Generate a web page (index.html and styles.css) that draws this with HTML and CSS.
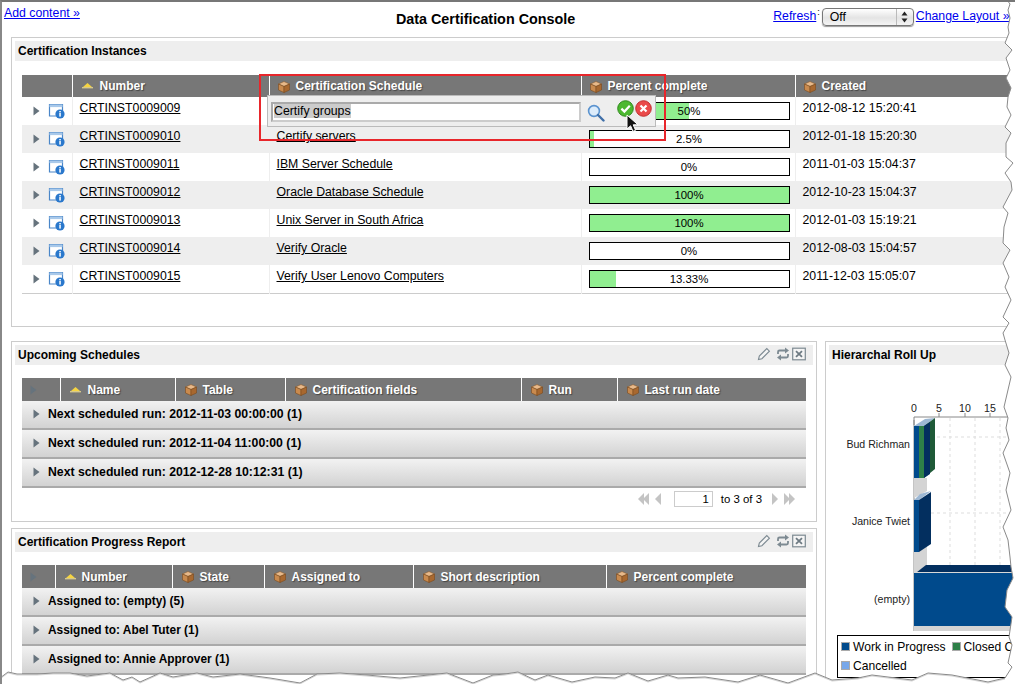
FILE: index.html
```html
<!DOCTYPE html>
<html lang="en">
<head>
  <meta charset="UTF-8">
  <title>Data Certification Console</title>
  <link rel="stylesheet" href="styles.css">
</head>
<body>
<svg class="defs" width="0" height="0">
  <symbol id="cube" viewBox="0 0 12 12">
    <polygon points="6,0.5 11.5,3 6,5.5 0.5,3" fill="#e8b98a" stroke="#8a5a2c" stroke-width=".6"/>
    <polygon points="0.5,3 6,5.5 6,11.5 0.5,9" fill="#c98a4e" stroke="#7a4a20" stroke-width=".6"/>
    <polygon points="11.5,3 6,5.5 6,11.5 11.5,9" fill="#a8682f" stroke="#7a4a20" stroke-width=".6"/>
  </symbol>
  <symbol id="sort" viewBox="0 0 11 8">
    <polygon points="5.5,1 10,5 1,5" fill="#f5d442"/>
    <rect x="0" y="5" width="11" height="1.4" fill="#d8c98a"/>
  </symbol>
  <symbol id="arrow" viewBox="0 0 7 10">
    <polygon points="0.5,0.5 6.5,5 0.5,9.5" fill="#66737d"/>
  </symbol>
  <symbol id="info" viewBox="0 0 17 16">
    <path d="M11 13H1.5V1.5h13V8" fill="#fff" stroke="#4a86c8" stroke-width="1.2"/>
    <rect x="1.5" y="1.5" width="13" height="2.6" fill="#a9c9ea"/>
    <circle cx="12" cy="11" r="4.6" fill="#2a78cc"/>
    <rect x="11.3" y="10" width="1.5" height="3.6" fill="#fff"/>
    <rect x="11.3" y="8" width="1.5" height="1.4" fill="#fff"/>
  </symbol>
  <symbol id="dbl" viewBox="0 0 12 14">
    <polygon points="0,7 6,1 6,13" fill="#c4c4c4"/>
    <polygon points="5,7 11,1 11,13" fill="#c4c4c4"/>
  </symbol>
  <symbol id="single" viewBox="0 0 8 14">
    <polygon points="1,7 7,1 7,13" fill="#c4c4c4"/>
  </symbol>
  <symbol id="pencil" viewBox="0 0 14 14">
    <path d="M1.5 12.5l.8-3.4L9.8 1.6l2.6 2.6-7.5 7.5z" fill="#f4f4f4" stroke="#7d8a92" stroke-width="1.1"/>
  </symbol>
  <symbol id="refresh" viewBox="0 0 14 14">
    <path d="M2 7V5a1.5 1.5 0 0 1 1.5-1.5H9" fill="none" stroke="#7d8a92" stroke-width="1.8"/>
    <polygon points="9,0.5 13,3.5 9,6.5" fill="#7d8a92"/>
    <path d="M12 7v2a1.5 1.5 0 0 1-1.5 1.5H5" fill="none" stroke="#7d8a92" stroke-width="1.8"/>
    <polygon points="5,7.5 1,10.5 5,13.5" fill="#7d8a92"/>
  </symbol>
  <symbol id="closebox" viewBox="0 0 14 14">
    <rect x=".7" y="1.2" width="12.6" height="11.6" fill="#f4f4f4" stroke="#7d8a92" stroke-width="1.2"/>
    <path d="M4 4.2l6 5.6M10 4.2l-6 5.6" stroke="#6d7a82" stroke-width="1.8"/>
  </symbol>
</svg>

<div class="page">
  <div class="topbar">
    <a class="link" href="#">Add content »</a>
    <h1 class="title">Data Certification Console</h1>
    <div class="top-right">
      <a class="link" href="#">Refresh</a><span class="colon">:</span>
      <div class="select">
        <span class="select-value">Off</span>
        <span class="select-arrows">
          <svg width="7" height="12" viewBox="0 0 7 12"><polygon points="3.5,0.5 6.5,4.5 0.5,4.5" fill="#222"/><polygon points="3.5,11.5 6.5,7.5 0.5,7.5" fill="#222"/></svg>
        </span>
      </div>
      <a class="link" href="#">Change Layout »</a>
    </div>
  </div>

  <div class="layout">
    <section class="panel panel-wide">
      <div class="panel-head"><h2>Certification Instances</h2></div>
      <table class="grid grid-instances">
        <colgroup><col class="c50"><col class="c197"><col class="c312"><col class="c214"><col class="c230"></colgroup>
        <thead>
          <tr>
            <th></th>
            <th><span class="th-in sorted"><svg class="sort-ic"><use href="#sort"/></svg>Number</span></th>
            <th><span class="th-in"><svg class="cube-ic"><use href="#cube"/></svg>Certification Schedule</span></th>
            <th><span class="th-in"><svg class="cube-ic"><use href="#cube"/></svg>Percent complete</span></th>
            <th><span class="th-in"><svg class="cube-ic"><use href="#cube"/></svg>Created</span></th>
          </tr>
        </thead>
        <tbody>
          <tr>
            <td><span class="row-tools"><svg class="arrow-ic"><use href="#arrow"/></svg><svg class="info-ic"><use href="#info"/></svg></span></td>
            <td><a href="#">CRTINST0009009</a></td>
            <td></td>
            <td class="pct"><div class="bar"><div class="fill" style="width:50%"></div><span>50%</span></div></td>
            <td>2012-08-12 15:20:41</td>
          </tr>
          <tr>
            <td><span class="row-tools"><svg class="arrow-ic"><use href="#arrow"/></svg><svg class="info-ic"><use href="#info"/></svg></span></td>
            <td><a href="#">CRTINST0009010</a></td>
            <td><a href="#">Certify servers</a></td>
            <td class="pct"><div class="bar"><div class="fill" style="width:2.5%"></div><span>2.5%</span></div></td>
            <td>2012-01-18 15:20:30</td>
          </tr>
          <tr>
            <td><span class="row-tools"><svg class="arrow-ic"><use href="#arrow"/></svg><svg class="info-ic"><use href="#info"/></svg></span></td>
            <td><a href="#">CRTINST0009011</a></td>
            <td><a href="#">IBM Server Schedule</a></td>
            <td class="pct"><div class="bar"><span>0%</span></div></td>
            <td>2011-01-03 15:04:37</td>
          </tr>
          <tr>
            <td><span class="row-tools"><svg class="arrow-ic"><use href="#arrow"/></svg><svg class="info-ic"><use href="#info"/></svg></span></td>
            <td><a href="#">CRTINST0009012</a></td>
            <td><a href="#">Oracle Database Schedule</a></td>
            <td class="pct"><div class="bar"><div class="fill" style="width:100%"></div><span>100%</span></div></td>
            <td>2012-10-23 15:04:37</td>
          </tr>
          <tr>
            <td><span class="row-tools"><svg class="arrow-ic"><use href="#arrow"/></svg><svg class="info-ic"><use href="#info"/></svg></span></td>
            <td><a href="#">CRTINST0009013</a></td>
            <td><a href="#">Unix Server in South Africa</a></td>
            <td class="pct"><div class="bar"><div class="fill" style="width:100%"></div><span>100%</span></div></td>
            <td>2012-01-03 15:19:21</td>
          </tr>
          <tr>
            <td><span class="row-tools"><svg class="arrow-ic"><use href="#arrow"/></svg><svg class="info-ic"><use href="#info"/></svg></span></td>
            <td><a href="#">CRTINST0009014</a></td>
            <td><a href="#">Verify Oracle</a></td>
            <td class="pct"><div class="bar"><span>0%</span></div></td>
            <td>2012-08-03 15:04:57</td>
          </tr>
          <tr>
            <td><span class="row-tools"><svg class="arrow-ic"><use href="#arrow"/></svg><svg class="info-ic"><use href="#info"/></svg></span></td>
            <td><a href="#">CRTINST0009015</a></td>
            <td><a href="#">Verify User Lenovo Computers</a></td>
            <td class="pct"><div class="bar"><div class="fill" style="width:13.33%"></div><span>13.33%</span></div></td>
            <td>2011-12-03 15:05:07</td>
          </tr>
        </tbody>
      </table>
    </section>

    <div class="left-col">
      <section class="panel panel-upcoming">
        <div class="panel-head">
          <h2>Upcoming Schedules</h2>
          <span class="panel-tools">
            <svg><use href="#pencil"/></svg><svg><use href="#refresh"/></svg><svg><use href="#closebox"/></svg>
          </span>
        </div>
        <table class="grid grid-groups">
          <colgroup><col class="c38"><col class="c115"><col class="c110"><col class="c236"><col class="c96"><col class="c189"></colgroup>
          <thead>
            <tr>
              <th><svg class="arrow-ic head-arrow"><use href="#arrow"/></svg></th>
              <th><span class="th-in sorted"><svg class="sort-ic"><use href="#sort"/></svg>Name</span></th>
              <th><span class="th-in"><svg class="cube-ic"><use href="#cube"/></svg>Table</span></th>
              <th><span class="th-in"><svg class="cube-ic"><use href="#cube"/></svg>Certification fields</span></th>
              <th><span class="th-in"><svg class="cube-ic"><use href="#cube"/></svg>Run</span></th>
              <th><span class="th-in"><svg class="cube-ic"><use href="#cube"/></svg>Last run date</span></th>
            </tr>
          </thead>
          <tbody>
            <tr class="group"><td colspan="6"><svg class="arrow-ic"><use href="#arrow"/></svg>Next scheduled run: 2012-11-03 00:00:00 (1)</td></tr>
            <tr class="group"><td colspan="6"><svg class="arrow-ic"><use href="#arrow"/></svg>Next scheduled run: 2012-11-04 11:00:00 (1)</td></tr>
            <tr class="group"><td colspan="6"><svg class="arrow-ic"><use href="#arrow"/></svg>Next scheduled run: 2012-12-28 10:12:31 (1)</td></tr>
          </tbody>
        </table>
        <div class="pager">
          <svg class="pg-dbl"><use href="#dbl"/></svg>
          <svg class="pg-one"><use href="#single"/></svg>
          <span class="pg-input">1</span>
          <span class="pg-text">to 3 of 3</span>
          <svg class="pg-one flip"><use href="#single"/></svg>
          <svg class="pg-dbl flip"><use href="#dbl"/></svg>
        </div>
      </section>

      <section class="panel panel-progress">
        <div class="panel-head">
          <h2>Certification Progress Report</h2>
          <span class="panel-tools">
            <svg><use href="#pencil"/></svg><svg><use href="#refresh"/></svg><svg><use href="#closebox"/></svg>
          </span>
        </div>
        <table class="grid grid-groups">
          <colgroup><col class="c33"><col class="c117"><col class="c92"><col class="c149"><col class="c193"><col class="c200"></colgroup>
          <thead>
            <tr>
              <th><svg class="arrow-ic head-arrow"><use href="#arrow"/></svg></th>
              <th><span class="th-in sorted"><svg class="sort-ic"><use href="#sort"/></svg>Number</span></th>
              <th><span class="th-in"><svg class="cube-ic"><use href="#cube"/></svg>State</span></th>
              <th><span class="th-in"><svg class="cube-ic"><use href="#cube"/></svg>Assigned to</span></th>
              <th><span class="th-in"><svg class="cube-ic"><use href="#cube"/></svg>Short description</span></th>
              <th><span class="th-in"><svg class="cube-ic"><use href="#cube"/></svg>Percent complete</span></th>
            </tr>
          </thead>
          <tbody>
            <tr class="group"><td colspan="6"><svg class="arrow-ic"><use href="#arrow"/></svg>Assigned to: (empty) (5)</td></tr>
            <tr class="group"><td colspan="6"><svg class="arrow-ic"><use href="#arrow"/></svg>Assigned to: Abel Tuter (1)</td></tr>
            <tr class="group"><td colspan="6"><svg class="arrow-ic"><use href="#arrow"/></svg>Assigned to: Annie Approver (1)</td></tr>
          </tbody>
        </table>
      </section>
    </div>

    <section class="panel panel-rollup">
      <div class="panel-head"><h2>Hierarchal Roll Up</h2></div>
      <svg class="chart" viewBox="829 365 186 320" width="186" height="320">
        <g class="chart-axis-text">
          <text x="914" y="412">0</text><text x="939" y="412">5</text><text x="965" y="412">10</text><text x="990" y="412">15</text>
        </g>
        <g stroke="#ddd" stroke-dasharray="3 3" fill="none">
          <path d="M950 418V565M975 418V565M1000 418V565"/>
          <path d="M925 437H1015M925 513H1015"/>
        </g>
        <path d="M914 417H1015M914 417V631" stroke="#888" fill="none"/>
        <path d="M914 420v5M939 413v4M965 413v4M990 413v4" stroke="#888"/>
        <!-- floor wedges -->
        <polygon points="914,478 927,478 927,491 914,498" fill="#d4d4d4"/>
        <polygon points="914,552 927,544 927,565 917,572 914,572" fill="#d4d4d4"/>
        <polygon points="914,626 1015,626 1015,631 914,631" fill="#d4d4d4"/>
        <!-- Bud Richman -->
        <polygon points="914,426 925,419 935,418 924,426" fill="#9db8d4"/>
        <polygon points="924,426 935,418 935,469 924,478" fill="#1f5a38"/>
        <polygon points="924,426 930,422 930,474 924,478" fill="#032f5f"/>
        <rect x="914" y="426" width="5" height="52" fill="#004a8c"/>
        <rect x="919" y="426" width="5" height="52" fill="#2e8048"/>
        <!-- Janice Twiet -->
        <polygon points="914,500 920,494 931,491 919,500" fill="#9db8d4"/>
        <polygon points="919,500 931,492 931,544 919,552" fill="#032f5f"/>
        <rect x="914" y="500" width="5" height="52" fill="#004a8c"/>
        <!-- empty -->
        <polygon points="917,572 926,565 1015,565 1015,572" fill="#032f5f"/>
        <rect x="914" y="572" width="101" height="1" fill="#d8d8d8"/>
        <rect x="914" y="573" width="101" height="53" fill="#004a8c"/>
        <g class="chart-label">
          <text x="910" y="448">Bud Richman</text>
          <text x="910" y="525">Janice Twiet</text>
          <text x="910" y="603">(empty)</text>
        </g>
      </svg>
      <div class="legend">
        <span class="legend-item"><i class="sw sw-blue"></i>Work in Progress</span>
        <span class="legend-item"><i class="sw sw-green"></i>Closed Complete</span>
        <span class="legend-item"><i class="sw sw-light"></i>Cancelled</span>
      </div>
    </section>
  </div>

  <!-- inline edit popup + annotation over the table -->
  <div class="popup">
    <div class="popup-input"><span class="selected">Certify groups</span></div>
    <svg class="magnifier" width="18" height="18" viewBox="0 0 18 18">
      <circle cx="7" cy="7" r="5.4" fill="#dcecfb" stroke="#5b93cf" stroke-width="1.6"/>
      <path d="M11 11l5.5 5.5" stroke="#3f6fa8" stroke-width="2.4" stroke-linecap="round"/>
    </svg>
    <svg class="round-btn" width="17" height="17" viewBox="0 0 17 17">
      <circle cx="8.5" cy="8.5" r="7.8" fill="#4cb830" stroke="#2f8a1e"/>
      <path d="M4.4 8.6l3 3 5.4-5.8" fill="none" stroke="#fff" stroke-width="2.2"/>
    </svg>
    <svg class="round-btn" width="17" height="17" viewBox="0 0 17 17">
      <circle cx="8.5" cy="8.5" r="7.8" fill="#ea4a4a" stroke="#c23030"/>
      <path d="M5.5 5.5l6 6M11.5 5.5l-6 6" stroke="#fff" stroke-width="2.2"/>
    </svg>
  </div>
  <svg class="cursor" width="14" height="19" viewBox="0 0 14 19">
    <path d="M1 1v14l3.6-3.2 2.4 5.6 2.6-1.1-2.4-5.5h4.8z" fill="#111" stroke="#fff"/>
  </svg>
  <div class="annotation"></div>

  <svg class="tear" width="1015" height="684" viewBox="0 0 1015 684">
    <path class="tear-fill" d="M1007 0L1010 4 1008 10 1010 18 1008 27 1009 33 1005 43 1012 50 1006 58 1010 70 1006 78 1011 88 1008 97 1007 107 1011 115 1005 127 1011 133 1006 143 1006 157 1013 163 1005 173 1011 182 1012 190 1003 207 1008 213 1004 227 1003 243 1010 250 1003 263 1009 277 1005 287 1011 300 1003 317 1009 323 1003 333 1005 340 1009 353 1005 365 1011 377 1004 407 1008 418 1006 428 1009 440 1003 453 1010 473 1006 490 1011 510 1003 527 1008 540 1010 557 1011 567 1013 578 1007 590 1005 607 1012 617 1009 637 1012 645 1008 663 1012 667 1005 678 988 682 952 675 928 673 912 680 872 675 858 678 832 680 815 673 788 683 760 675 738 682 705 677 678 678 668 675 648 681 628 673 615 678 595 677 572 682 548 675 535 680 518 672 505 674 493 675 473 683 447 673 400 678 367 675 340 673 317 674 300 683 270 678 240 674 213 677 197 673 173 677 160 673 140 682 132 677 123 680 110 673 87 676 70 673 53 673 37 674 17 674 8 672 0 678V684H1015V0Z"/>
    <path class="tear-shadow" d="M1005 679L988 683 952 676 928 674 912 681 872 676 858 679 832 681 815 674 788 684 760 676 738 683 705 678 678 679 668 676 648 682 628 674 615 679 595 678 572 683 548 676 535 681 518 673 505 675 493 676 473 684 447 674 400 679 367 676 340 674 317 675 300 684 270 679 240 675 213 678 197 674 173 678 160 674 140 683 132 678 123 681 110 674 87 677 70 674 53 674 37 675 17 675 8 673 0 679"/>
    <path class="tear-line" d="M1007 0L1010 4 1008 10 1010 18 1008 27 1009 33 1005 43 1012 50 1006 58 1010 70 1006 78 1011 88 1008 97 1007 107 1011 115 1005 127 1011 133 1006 143 1006 157 1013 163 1005 173 1011 182 1012 190 1003 207 1008 213 1004 227 1003 243 1010 250 1003 263 1009 277 1005 287 1011 300 1003 317 1009 323 1003 333 1005 340 1009 353 1005 365 1011 377 1004 407 1008 418 1006 428 1009 440 1003 453 1010 473 1006 490 1011 510 1003 527 1008 540 1010 557 1011 567 1013 578 1007 590 1005 607 1012 617 1009 637 1012 645 1008 663 1012 667 1005 678 988 682 952 675 928 673 912 680 872 675 858 678 832 680 815 673 788 683 760 675 738 682 705 677 678 678 668 675 648 681 628 673 615 678 595 677 572 682 548 675 535 680 518 672 505 674 493 675 473 683 447 673 400 678 367 675 340 673 317 674 300 683 270 678 240 674 213 677 197 673 173 677 160 673 140 682 132 677 123 680 110 673 87 676 70 673 53 673 37 674 17 674 8 672 0 678"/>
  </svg>
</div>
</body>
</html>
```

FILE: styles.css
```css
* {
  box-sizing: border-box;
}

body {
  margin: 0;
  background: white;
  color: #000;
  font-family: "Liberation Sans", Arial, sans-serif;
  font-size: 12.3px;
}

.defs {
  position: absolute;
}

.page {
  position: relative;
  width: 1015px;
  height: 684px;
  overflow: hidden;
  background: white;
  border-top: 2px solid #777;
  border-left: 2px solid #888;
}

.link {
  color: #00e;
  text-decoration: underline;
}

/* top bar */
.topbar {
  display: flex;
  align-items: flex-start;
  height: 35px;
  padding: 4px 0 0 2px;
}

.title {
  margin: 5px 0 0 316px;
  font-size: 14.35px;
  font-weight: bold;
  line-height: 16px;
}

.top-right {
  display: flex;
  align-items: flex-start;
  margin-left: 198px;
  padding-top: 3px;
  white-space: nowrap;
}

.colon {
  font-size: 9px;
  margin: -2px 2px 0 1px;
}

.select {
  display: flex;
  width: 92px;
  height: 18px;
  margin: -1px 2px 0 0;
  border: 1px solid #777;
  border-radius: 4px;
  background: linear-gradient(#fff, #e4e4e4 55%, #f4f4f4);
  box-shadow: 0 1px 1px #999;
}

.select-value {
  flex: 1;
  padding-left: 7px;
  line-height: 17px;
}

.select-arrows {
  width: 17px;
  display: flex;
  align-items: center;
  justify-content: center;
  border-left: 1px solid #bbb;
}

/* panels */
.layout {
  display: grid;
  grid-template-columns: 806px 300px;
  column-gap: 8px;
  row-gap: 14px;
  margin-left: 9px;
}

.panel {
  border: 1px solid #ccc;
  padding: 3px;
  background: white;
}

.panel-wide {
  grid-column: 1 / 3;
  height: 290px;
}

.left-col {
  display: flex;
  flex-direction: column;
  gap: 6px;
}

.panel-upcoming {
  height: 181px;
}

.panel-progress {
  height: 200px;
}

.panel-head {
  display: flex;
  align-items: center;
  justify-content: space-between;
  height: 20px;
  padding: 0 7px 0 3px;
  background: #eee;
}

.panel-head h2 {
  margin: 0;
  font-size: 12px;
  font-weight: bold;
}

.panel-tools {
  display: flex;
  gap: 2px;
  margin-top: -3px;
}

.panel-tools svg {
  width: 14px;
  height: 14px;
}

.panel-tools svg:first-child {
  margin-right: 3px;
}

/* tables */
.grid {
  border-collapse: collapse;
  table-layout: fixed;
  margin: 13px 0 0 7px;
}

.grid-instances {
  width: 1003px;
  margin-top: 14px;
  border-bottom: 1px solid #ccc;
}

.grid-groups {
  width: 784px;
}

.c33 { width: 33px; }
.c38 { width: 38px; }
.c50 { width: 50px; }
.c92 { width: 92px; }
.c96 { width: 96px; }
.c110 { width: 110px; }
.c115 { width: 115px; }
.c117 { width: 117px; }
.c149 { width: 149px; }
.c189 { width: 189px; }
.c193 { width: 193px; }
.c197 { width: 197px; }
.c200 { width: 200px; }
.c214 { width: 214px; }
.c230 { width: 230px; }
.c236 { width: 236px; }
.c312 { width: 312px; }

.grid th {
  height: 23px;
  padding: 0;
  background: #777;
  border-left: 1px solid #fff;
  color: white;
  font-size: 12px;
  font-weight: bold;
  text-align: left;
  text-shadow: 1px 1px 1px #444;
}

.grid-instances th {
  height: 22px;
}

.grid th:first-child {
  border-left: none;
}

.th-in {
  display: flex;
  align-items: center;
  gap: 6px;
  padding-left: 8px;
  white-space: nowrap;
}

.grid-groups .th-in {
  padding-left: 9px;
}

.grid-instances .sorted {
  padding-left: 9px;
}

.panel-wide .sorted,
.panel-upcoming .sorted {
  gap: 7px;
}

.cube-ic {
  width: 12px;
  height: 12px;
  flex: none;
  margin-top: 1px;
}

.sort-ic {
  width: 11px;
  height: 8px;
  flex: none;
}

.arrow-ic {
  width: 7px;
  height: 10px;
  flex: none;
}

.head-arrow {
  display: block;
  margin-left: 8px;
}

.info-ic {
  width: 17px;
  height: 16px;
  flex: none;
}

.grid-instances td {
  height: 28px;
  padding: 4px 7px 0;
  border-left: 1px solid #eee;
  vertical-align: top;
  white-space: nowrap;
}

.grid-instances td:first-child {
  border-left: none;
  padding: 6px 0 0 11px;
}

.grid-instances td.pct {
  padding-right: 5px;
}

.grid-instances tbody tr:nth-child(even) td {
  background: #eee;
}

.grid-instances a {
  color: #000;
  text-decoration: underline;
}

.row-tools {
  display: flex;
  align-items: center;
  gap: 8px;
}

.bar {
  position: relative;
  height: 18px;
  margin-top: 1px;
  border: 1px solid #000;
  background: white;
  font-size: 11.4px;
  line-height: 16px;
  text-align: center;
}

.fill {
  position: absolute;
  left: 0;
  top: 0;
  bottom: 0;
  background: #90ee90;
}

.bar span {
  position: relative;
}

.group td {
  height: 29px;
  padding: 0 0 2px 11px;
  background: linear-gradient(#f2f2f2, #d2d2d2);
  border-bottom: 2px solid #aaa;
  font-size: 12.25px;
  font-weight: bold;
  white-space: nowrap;
}

.group:first-child td {
  height: 28px;
}

.panel-progress .group td {
  font-size: 11.9px;
}

.group .arrow-ic {
  margin-right: 8px;
  vertical-align: -1px;
}

/* pager */
.pager {
  display: flex;
  align-items: center;
  justify-content: flex-end;
  gap: 4px;
  height: 16px;
  margin-top: 3px;
  padding-right: 18px;
  font-size: 11.4px;
}

.pg-dbl {
  width: 12px;
  height: 14px;
}

.pg-one {
  width: 8px;
  height: 14px;
}

.flip {
  transform: scaleX(-1);
}

.pg-input {
  width: 39px;
  height: 16px;
  margin-left: 8px;
  padding-right: 3px;
  border: 1px solid #ccc;
  text-align: right;
  line-height: 14px;
}

.pg-text {
  margin: 0 5px 0 4px;
}

/* roll up chart */
.panel-rollup {
  position: relative;
  height: 400px;
}

.chart {
  display: block;
}

.chart text {
  font-size: 10.6px;
  fill: #222;
}

.chart-axis-text text {
  text-anchor: middle;
}

.chart-label text {
  text-anchor: end;
}

.legend {
  position: absolute;
  left: 11px;
  top: 293px;
  display: flex;
  flex-wrap: wrap;
  gap: 0 6px;
  width: 240px;
  height: 43px;
  padding: 2px 3px;
  border: 1px solid #000;
  background: white;
  font-size: 12.1px;
  white-space: nowrap;
}

.legend-item {
  line-height: 19px;
}

.sw {
  display: inline-block;
  width: 9px;
  height: 9px;
  margin-right: 3px;
  border: 1px solid #aaa;
}

.sw-blue { background: #004a8c; }
.sw-green { background: #2e8048; }
.sw-light { background: #78a8ea; }

/* overlays */
.popup {
  position: absolute;
  left: 265px;
  top: 93px;
  display: flex;
  align-items: flex-start;
  width: 389px;
  height: 32px;
  padding: 6px 0 0 3px;
  background: #eee;
  border: 1px solid #bbb;
}

.popup-input {
  width: 310px;
  height: 20px;
  padding: 0 1px;
  background: white;
  border: 2px solid #aaa;
  border-right-color: #ccc;
  border-bottom-color: #ccc;
  line-height: 15px;
}

.selected {
  background: #ccc;
}

.magnifier {
  margin: 2px 0 0 6px;
}

.round-btn {
  margin: -2px 0 0 1px;
}

.magnifier + .round-btn {
  margin-left: 12px;
}

.cursor {
  position: absolute;
  left: 624px;
  top: 112px;
}

.annotation {
  position: absolute;
  left: 257px;
  top: 72px;
  width: 407px;
  height: 67px;
  border: 2px solid #e8262b;
}

.tear {
  position: absolute;
  left: -2px;
  top: -2px;
}

.tear-fill {
  fill: white;
}

.tear-line {
  fill: none;
  stroke: #8a8a8a;
}

.tear-shadow {
  fill: none;
  stroke: #d4d4d4;
}
```
